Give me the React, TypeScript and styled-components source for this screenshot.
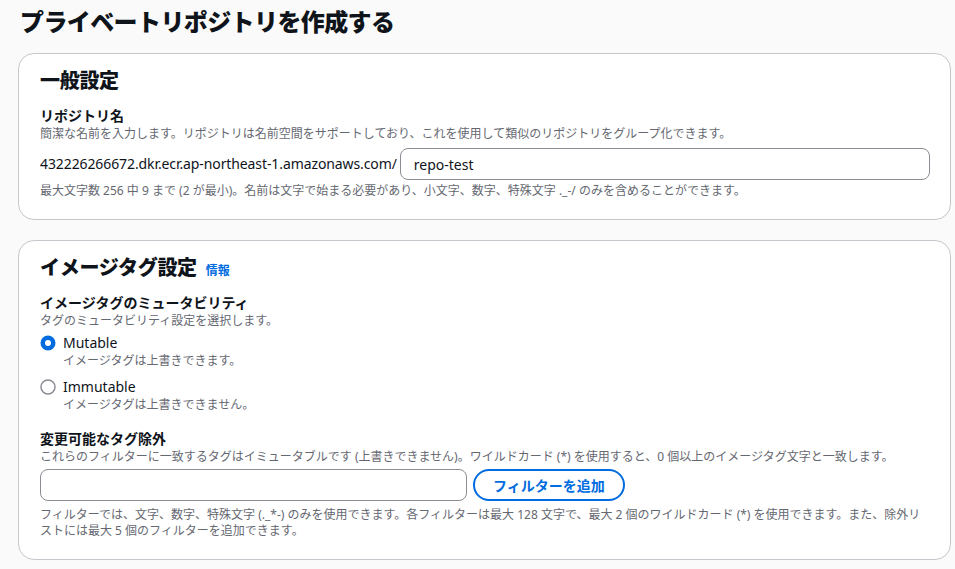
import React from "react";
import styled, { createGlobalStyle } from "styled-components";

const GlobalStyle = createGlobalStyle`
    html, body {
        margin: 0;
        padding: 0;
        background: #fafafa;
    }
    body {
        font-family: "Noto Sans", "Noto Sans CJK JP", sans-serif;
        color: #0f141a;
    }
`;

const Page = styled.div`
    padding: 6px 4px 10px 18px;
    display: flex;
    flex-direction: column;
    gap: 20px;
`;

const Title = styled.h1`
    margin: 0 0 0 2px;
    font-size: 24px;
    line-height: 32px;
    font-weight: 800;
    letter-spacing: -0.6px;
    height: 27px;
`;

const Card = styled.section`
    background: #ffffff;
    border: 1px solid #c6c6cd;
    border-radius: 16px;
    padding: 14px 20px 20px 21px;
    display: flex;
    flex-direction: column;
`;

const CardHeader = styled.div`
    display: flex;
    align-items: baseline;
    gap: 9px;
    margin-bottom: 12px;
`;

const CardTitle = styled.h2`
    margin: 0;
    font-size: 20px;
    line-height: 26px;
    font-weight: 800;
    letter-spacing: -0.3px;
`;

const InfoLink = styled.a`
    font-size: 12px;
    font-weight: 700;
    color: #006ce0;
    text-decoration: none;
`;

const Field = styled.div<{ spacing?: number }>`
    display: flex;
    flex-direction: column;
    margin-top: ${(p) => p.spacing ?? 0}px;
`;

const Label = styled.div`
    font-size: 14px;
    line-height: 20px;
    font-weight: 700;
`;

const Description = styled.div<{ gap?: number }>`
    font-size: 12px;
    line-height: 16px;
    color: #656871;
    margin-top: ${(p) => p.gap ?? 0}px;
`;

const UriRow = styled.div`
    display: flex;
    align-items: center;
    gap: 3px;
    margin-top: 6px;
`;

const Prefix = styled.span`
    font-size: 14px;
    line-height: 20px;
    letter-spacing: -0.1px;
    white-space: nowrap;
`;

const TextInput = styled.div<{ width?: string }>`
    box-sizing: border-box;
    height: 32px;
    width: ${(p) => p.width || "auto"};
    flex: ${(p) => (p.width ? "none" : "1")};
    border: 1px solid #8c8c94;
    border-radius: 8px;
    background: #ffffff;
    padding: 0 13px;
    display: flex;
    align-items: center;
    font-size: 14px;
`;

const RadioGroup = styled.div`
    display: flex;
    flex-direction: column;
    gap: 8px;
    margin-top: 4px;
`;

const RadioItem = styled.label`
    display: grid;
    grid-template-columns: 16px 1fr;
    column-gap: 7px;
    align-items: center;
`;

const RadioText = styled.span`
    font-size: 14px;
    line-height: 20px;
`;

const RadioDesc = styled.span`
    grid-column: 2;
    font-size: 12px;
    line-height: 16px;
    color: #656871;
`;

const FilterRow = styled.div`
    display: flex;
    align-items: center;
    gap: 6px;
    margin-top: 4px;
`;

const OutlineButton = styled.button`
    box-sizing: border-box;
    height: 32px;
    padding: 0 18px;
    border: 2px solid #006ce0;
    border-radius: 20px;
    background: #ffffff;
    color: #006ce0;
    font-family: inherit;
    font-size: 14px;
    font-weight: 700;
    white-space: nowrap;
`;

const Radio: React.FC<{ checked?: boolean }> = ({ checked }) =>
    checked ? (
        <svg width="16" height="16" viewBox="0 0 16 16">
            <circle cx="8" cy="8" r="7.5" fill="#006ce0" />
            <circle cx="8" cy="8" r="3" fill="#ffffff" />
        </svg>
    ) : (
        <svg width="16" height="16" viewBox="0 0 16 16">
            <circle cx="8" cy="8" r="7" fill="#ffffff" stroke="#8c8c94" strokeWidth="1.5" />
        </svg>
    );

export default function App() {
    return (
        <>
            <GlobalStyle />
            <Page>
                <Title>プライベートリポジトリを作成する</Title>

                <Card>
                    <CardHeader>
                        <CardTitle>一般設定</CardTitle>
                    </CardHeader>
                    <Field>
                        <Label>リポジトリ名</Label>
                        <Description>
                            簡潔な名前を入力します。リポジトリは名前空間をサポートしており、これを使用して類似のリポジトリをグループ化できます。
                        </Description>
                        <UriRow>
                            <Prefix>432226266672.dkr.ecr.ap-northeast-1.amazonaws.com/</Prefix>
                            <TextInput>repo-test</TextInput>
                        </UriRow>
                        <Description gap={3}>
                            最大文字数 256 中 9 まで (2 が最小)。名前は文字で始まる必要があり、小文字、数字、特殊文字 ._-/ のみを含めることができます。
                        </Description>
                    </Field>
                </Card>

                <Card>
                    <CardHeader>
                        <CardTitle>イメージタグ設定</CardTitle>
                        <InfoLink href="#">情報</InfoLink>
                    </CardHeader>
                    <Field>
                        <Label>イメージタグのミュータビリティ</Label>
                        <Description>タグのミュータビリティ設定を選択します。</Description>
                        <RadioGroup>
                            <RadioItem>
                                <Radio checked />
                                <RadioText>Mutable</RadioText>
                                <RadioDesc>イメージタグは上書きできます。</RadioDesc>
                            </RadioItem>
                            <RadioItem>
                                <Radio />
                                <RadioText>Immutable</RadioText>
                                <RadioDesc>イメージタグは上書きできません。</RadioDesc>
                            </RadioItem>
                        </RadioGroup>
                    </Field>
                    <Field spacing={16}>
                        <Label>変更可能なタグ除外</Label>
                        <Description>
                            これらのフィルターに一致するタグはイミュータブルです (上書きできません)。ワイルドカード (*) を使用すると、0 個以上のイメージタグ文字と一致します。
                        </Description>
                        <FilterRow>
                            <TextInput width="427px" />
                            <OutlineButton>フィルターを追加</OutlineButton>
                        </FilterRow>
                        <Description gap={6}>
                            フィルターでは、文字、数字、特殊文字 (._*-) のみを使用できます。各フィルターは最大 128 文字で、最大 2 個のワイルドカード (*) を使用できます。また、除外リストには最大 5 個のフィルターを追加できます。
                        </Description>
                    </Field>
                </Card>
            </Page>
        </>
    );
}
